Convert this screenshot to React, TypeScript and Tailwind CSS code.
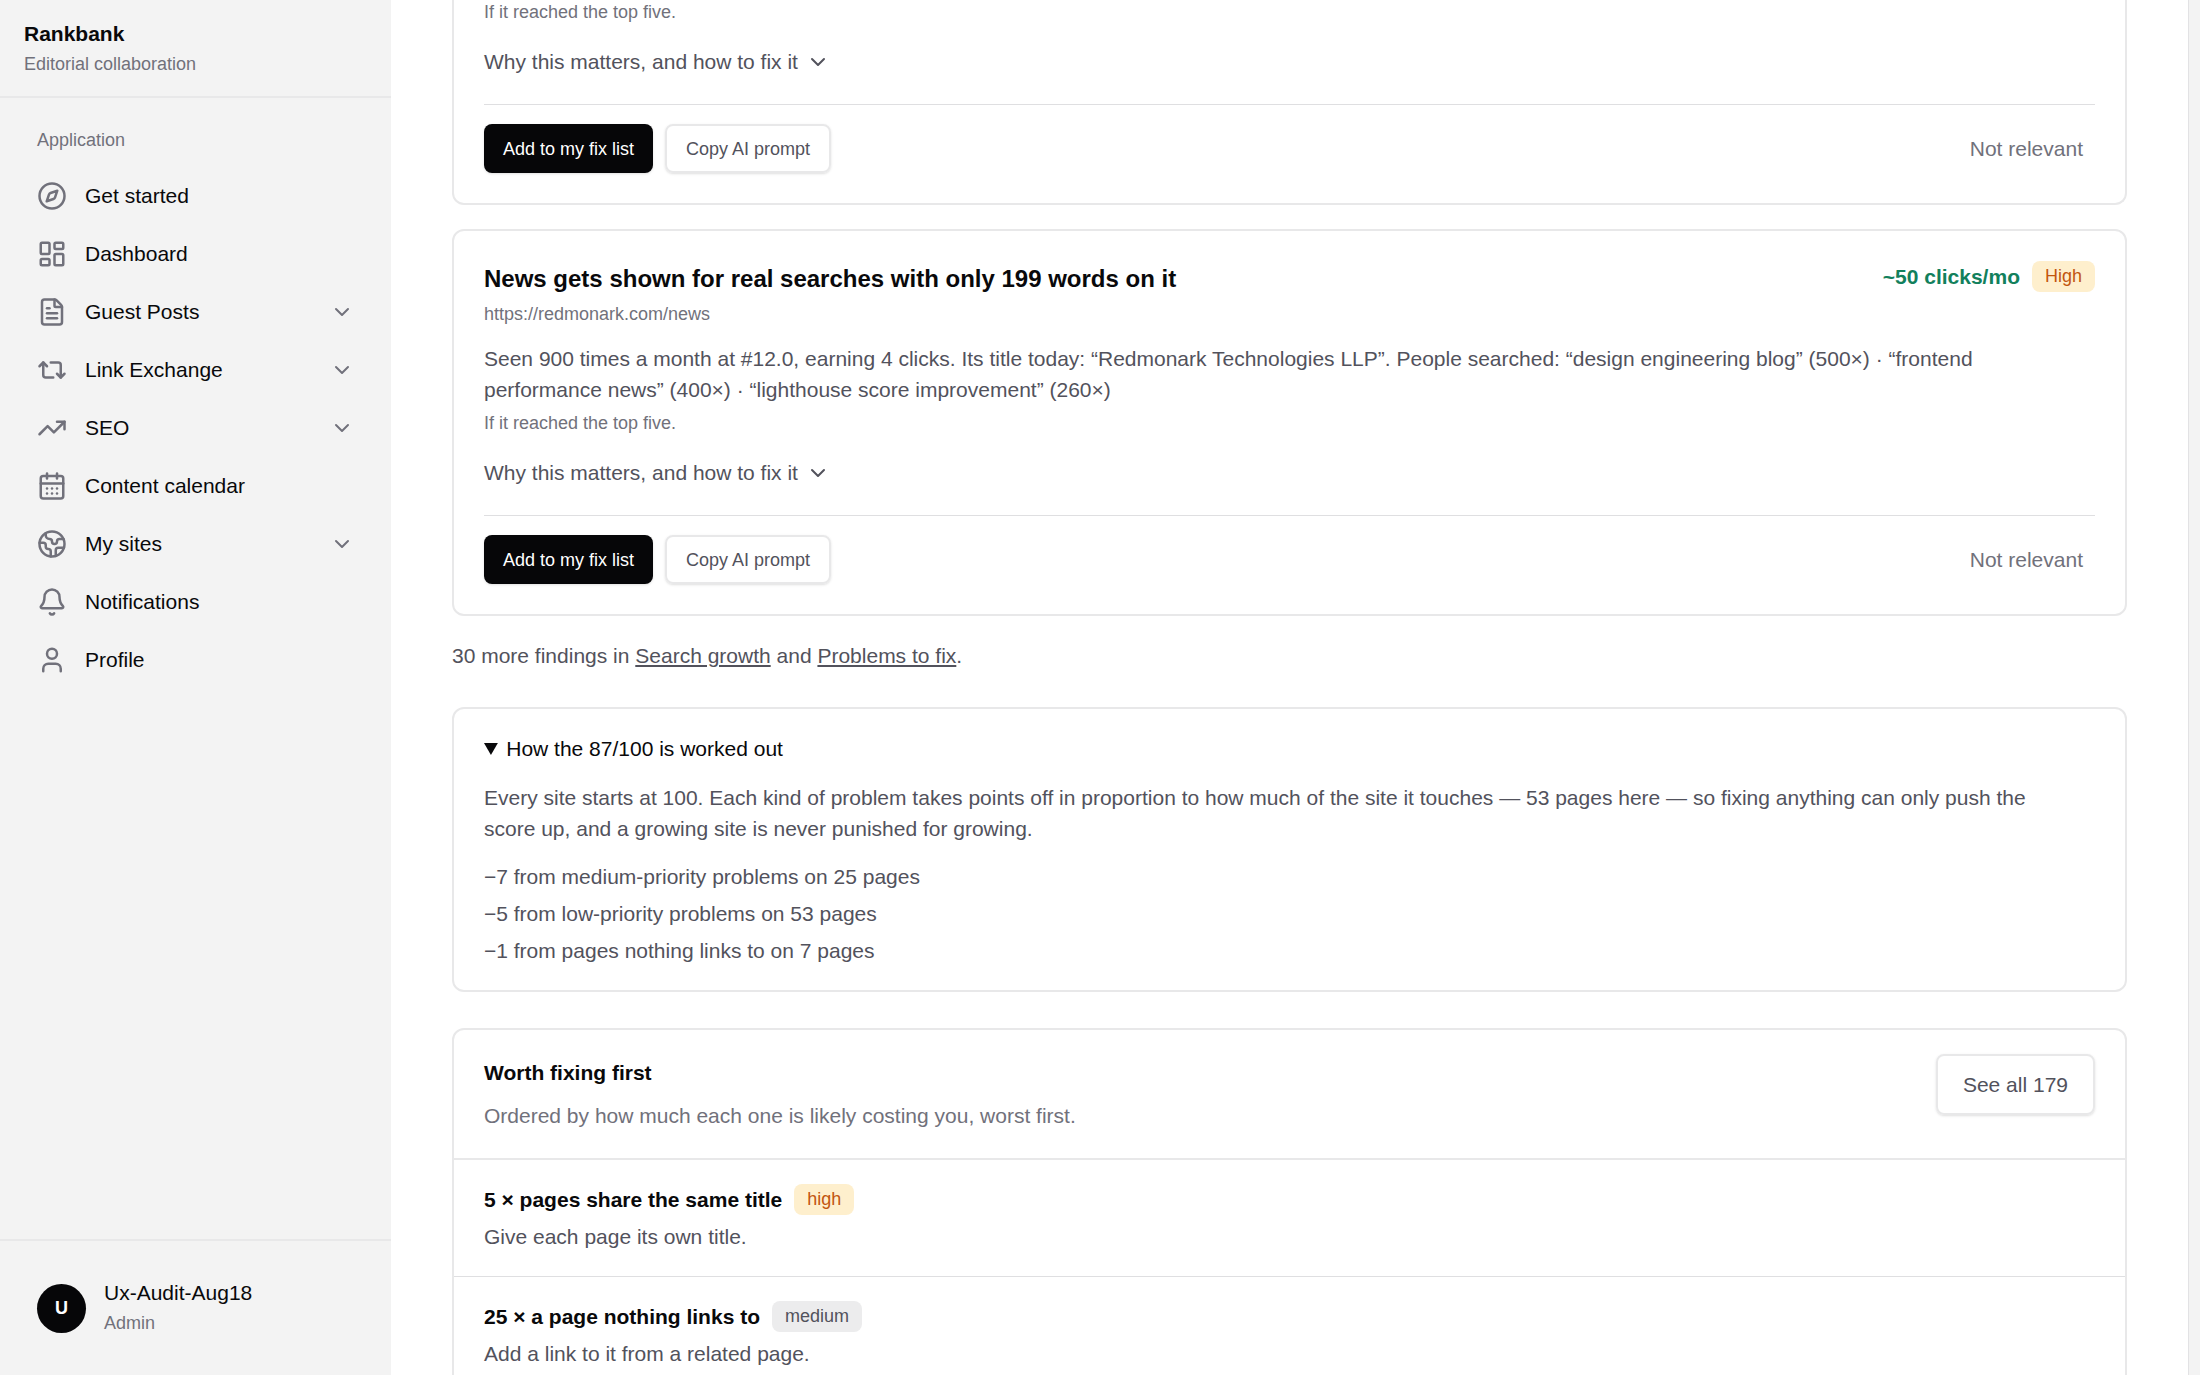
import type { ReactNode } from "react";
import {
    Bell,
    CalendarDays,
    ChevronDown,
    Compass,
    Earth,
    FileText,
    LayoutDashboard,
    Repeat2,
    TrendingUp,
    User,
    type LucideIcon,
} from "lucide-react";

type NavItem = { label: string; icon: LucideIcon; expandable?: boolean };

const navItems: NavItem[] = [
    { label: "Get started", icon: Compass },
    { label: "Dashboard", icon: LayoutDashboard },
    { label: "Guest Posts", icon: FileText, expandable: true },
    { label: "Link Exchange", icon: Repeat2, expandable: true },
    { label: "SEO", icon: TrendingUp, expandable: true },
    { label: "Content calendar", icon: CalendarDays },
    { label: "My sites", icon: Earth, expandable: true },
    { label: "Notifications", icon: Bell },
    { label: "Profile", icon: User },
];

const deductions = [
    "−7 from medium-priority problems on 25 pages",
    "−5 from low-priority problems on 53 pages",
    "−1 from pages nothing links to on 7 pages",
];

const fixes = [
    { title: "5 × pages share the same title", level: "high", hint: "Give each page its own title." },
    { title: "25 × a page nothing links to", level: "medium", hint: "Add a link to it from a related page." },
];

const Badge = ({ level, children }: { level: string; children: ReactNode }) => (
    <span
        className={`rounded-lg px-[13px] text-lg leading-[31px] ${
            level === "high" ? "bg-[#feefcd] text-[#c2560f]" : "bg-[#ececed] text-[#52525c]"
        }`}
    >
        {children}
    </span>
);

const Sidebar = () => (
    <aside className="flex w-[391px] shrink-0 flex-col bg-[#f3f3f3]">
        <div className="border-b-2 border-[#e8e8e9] px-6 pt-[18px] pb-[17px]">
            <div className="text-[21px] leading-[32px] font-bold">Rankbank</div>
            <div className="text-lg leading-[29px] text-[#71717b]">Editorial collaboration</div>
        </div>
        <nav className="flex-1 px-6 pt-6">
            <div className="px-[13px] text-lg leading-[37px] text-[#71717b]">Application</div>
            <ul className="mt-2">
                {navItems.map(({ label, icon: Icon, expandable }) => {
                    const content = (
                        <>
                            <Icon size={30} strokeWidth={2} className="shrink-0 text-[#71717b]" />
                            <span className="flex-1 text-left">{label}</span>
                            {expandable && <ChevronDown size={24} strokeWidth={2} className="shrink-0 text-[#71717b]" />}
                        </>
                    );
                    const itemClass = "flex h-[58px] w-full items-center gap-[18px] px-[13px] text-[21px]";
                    return (
                        <li key={label}>
                            {expandable ? (
                                <button type="button" aria-expanded="false" className={itemClass}>
                                    {content}
                                </button>
                            ) : (
                                <a href="#" className={itemClass}>
                                    {content}
                                </a>
                            )}
                        </li>
                    );
                })}
            </ul>
        </nav>
        <div className="flex h-[136px] items-center gap-[18px] border-t-2 border-[#e8e8e9] px-[37px]">
            <div className="flex size-[49px] items-center justify-center rounded-full bg-[#060608] text-lg font-bold text-white">
                U
            </div>
            <div>
                <div className="text-[21px] leading-[30px]">Ux-Audit-Aug18</div>
                <div className="text-lg leading-[30px] text-[#71717b]">Admin</div>
            </div>
        </div>
    </aside>
);

const FindingFooter = () => (
    <>
        <p className="text-lg leading-6 text-[#71717b]">If it reached the top five.</p>
        <button type="button" className="mt-[22px] flex items-center gap-2 text-[21px] leading-[32px] text-[#52525c]">
            Why this matters, and how to fix it
            <ChevronDown size={24} strokeWidth={2} />
        </button>
        <div className="mt-[26px] flex items-center border-t border-[#dfdfe1] pt-[19px]">
            <button type="button" className="h-[49px] rounded-lg bg-[#060608] px-[19px] text-lg text-white shadow-sm">
                Add to my fix list
            </button>
            <button
                type="button"
                className="ml-3 h-[49px] rounded-lg border-2 border-[#e8e8e9] px-[19px] text-lg text-[#52525c] shadow-sm"
            >
                Copy AI prompt
            </button>
            <button type="button" className="ml-auto px-3 text-[21px] text-[#71717b]">
                Not relevant
            </button>
        </div>
    </>
);

export default function App() {
    return (
        <div className="flex h-screen overflow-hidden bg-[#f3f3f3] font-['Liberation_Sans',Arial,sans-serif] text-[#09090b]">
            <Sidebar />
            <main className="mr-[11px] min-w-0 flex-1 border-r border-[#e2e2e4] bg-white px-[61px]">
                <article className="rounded-b-xl border-2 border-t-0 border-[#e8e8e9] px-[30px] pb-[30px]">
                    <FindingFooter />
                </article>

                <article className="mt-6 rounded-xl border-2 border-[#e8e8e9] p-[30px]">
                    <div className="flex items-start justify-between">
                        <div>
                            <h2 className="text-2xl leading-9 font-bold">
                                News gets shown for real searches with only 199 words on it
                            </h2>
                            <a href="#" className="block text-lg leading-[34px] text-[#71717b]">
                                https://redmonark.com/news
                            </a>
                        </div>
                        <div className="flex items-center gap-3">
                            <span className="text-[21px] leading-[31px] font-bold text-[#12805c]">~50 clicks/mo</span>
                            <Badge level="high">High</Badge>
                        </div>
                    </div>
                    <p className="mt-3 mb-1.5 text-[21px] leading-[31px] text-[#52525c]">
                        Seen 900 times a month at #12.0, earning 4 clicks. Its title today: “Redmonark Technologies LLP”. People
                        searched: “design engineering blog” (500×) · “frontend performance news” (400×) · “lighthouse score
                        improvement” (260×)
                    </p>
                    <FindingFooter />
                </article>

                <p className="mt-6 text-[21px] leading-[31px] text-[#52525c]">
                    30 more findings in{" "}
                    <a href="#" className="underline underline-offset-2">
                        Search growth
                    </a>{" "}
                    and{" "}
                    <a href="#" className="underline underline-offset-2">
                        Problems to fix
                    </a>
                    .
                </p>

                <details open className="mt-9 rounded-xl border-2 border-[#e8e8e9] px-[30px] pt-6 pb-6">
                    <summary className="text-[21px] leading-[31px]">How the 87/100 is worked out</summary>
                    <p className="mt-[18px] pr-6 text-[21px] leading-[31px] text-[#52525c]">
                        Every site starts at 100. Each kind of problem takes points off in proportion to how much of the site it
                        touches — 53 pages here — so fixing anything can only push the score up, and a growing site is never
                        punished for growing.
                    </p>
                    <ul className="mt-[17px] space-y-1.5 text-[21px] leading-[31px] text-[#52525c]">
                        {deductions.map((line) => (
                            <li key={line}>{line}</li>
                        ))}
                    </ul>
                </details>

                <section className="mt-9 rounded-xl border-2 border-[#e8e8e9]">
                    <div className="flex items-start justify-between px-[30px] py-6">
                        <div className="pt-[3px] pb-[3px]">
                            <h2 className="text-[21px] leading-[31px] font-bold">Worth fixing first</h2>
                            <p className="mt-3 text-[21px] leading-[31px] text-[#71717b]">
                                Ordered by how much each one is likely costing you, worst first.
                            </p>
                        </div>
                        <button
                            type="button"
                            className="h-[61px] rounded-lg border-2 border-[#e8e8e9] px-[25px] text-[21px] text-[#52525c] shadow-sm"
                        >
                            See all 179
                        </button>
                    </div>
                    <ul className="divide-y divide-[#dfdfe1] border-t-2 border-[#e8e8e9]">
                        {fixes.map((fix) => (
                            <li key={fix.title} className="px-[30px] py-6">
                                <div className="flex items-center gap-3">
                                    <h3 className="text-[21px] leading-[31px] font-bold">{fix.title}</h3>
                                    <Badge level={fix.level}>{fix.level}</Badge>
                                </div>
                                <p className="mt-1.5 text-[21px] leading-[31px] text-[#52525c]">{fix.hint}</p>
                            </li>
                        ))}
                    </ul>
                </section>
            </main>
        </div>
    );
}
